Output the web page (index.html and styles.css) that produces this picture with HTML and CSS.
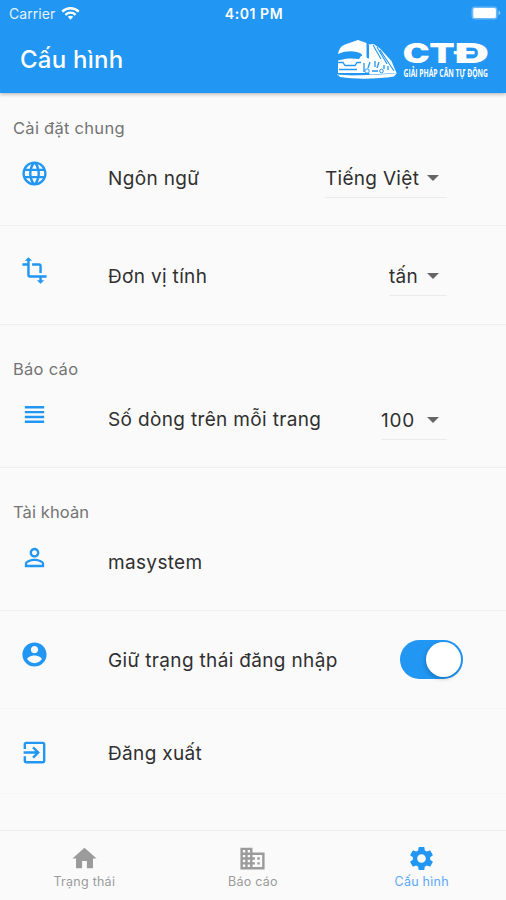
FILE: index.html
```html
<!DOCTYPE html>
<html lang="vi">
<head>
<meta charset="utf-8">
<meta name="viewport" content="width=device-width, initial-scale=1">
<title>Cấu hình</title>
<link rel="stylesheet" href="styles.css">
</head>
<body>
<div class="app">
  <header class="header">
    <div class="status">
      <div class="carrier"><span>Carrier</span>
        <svg class="wifi" viewBox="0 0 20 14"><g fill="none" stroke="#fff" stroke-width="2.5"><path d="M1.3 5.6C6.4.8 13.6.8 18.7 5.6"/><path d="M4.6 8.9C7.8 6 12.2 6 15.4 8.9"/></g><path fill="#fff" d="M10 14 7.1 11C8.8 9.6 11.2 9.6 12.9 11z"/></svg>
      </div>
      <div class="time">4:01 PM</div>
      <svg class="battery" viewBox="0 0 30 14"><rect x=".5" y=".5" width="26" height="13" rx="3.5" fill="#6db9f8"/><rect x="2.3" y="2" width="22.6" height="10" rx="1.5" fill="#fff"/><path fill="#8fc9fa" d="M27.5 4.8c2.4.5 2.4 3.9 0 4.4z"/></svg>
    </div>
    <div class="bar">
      <h1 class="title">Cấu hình</h1>
      <svg class="logo" viewBox="0 0 152 40">
        <g fill="#fff">
          <path d="M1 14C2 9 4 6 8 4.500L21 0l8.500 3V18l-4-1-1-3c-5-3-14-4-23.500 0z"/>
          <path d="M1 20.500c7-2.200 14-2.500 21-1.500l2-3 5 1 4 3v13H1z"/>
          <path d="M31.500 4.500l5-.500 6 4 12 13 5 12-27 1.500-1-14z"/>
          <path d="M0 34c18 2.500 42 1 60-1l-3 3.500c-16 2.500-38 3-54 .500z"/>
        </g>
        <g fill="none" stroke="#2196f3">
          <path stroke-width="1.300" d="M1 22.500h5l2 3h10l2-3h4M2 29.500h18M1 33.800c9 1 18 1 27 0"/>
          <path stroke-width="1.100" d="M31.500 5v13M36 5l8 14M40 7l10 17M43 10l14 21"/>
          <path stroke-width="1.300" d="M27 23v9M33 22l-2 6M38 21v6M42 22l-2 6M47 25v4M51 26v4M35 31h6"/>
          <circle cx="30" cy="31" r="2.200"/><circle cx="44.500" cy="31" r="1.800"/>
        </g>
        <g class="logo-name">
          <text x="65.800" y="23" textLength="27" lengthAdjust="spacingAndGlyphs">C</text>
          <text x="92.300" y="23" textLength="25.500" lengthAdjust="spacingAndGlyphs">T</text>
          <text x="117.500" y="23" textLength="34.500" lengthAdjust="spacingAndGlyphs">Đ</text>
        </g>
        <text class="logo-slogan" x="66.500" y="36.500" textLength="84.500" lengthAdjust="spacingAndGlyphs">GIẢI PHÁP CÂN TỰ ĐỘNG</text>
      </svg>
    </div>
  </header>

  <main class="settings">
    <section class="group">
      <h2 class="heading">Cài đặt chung</h2>
      <div class="row first">
        <svg class="icon globe" viewBox="0 0 24 24"><path d="M11.990 2C6.470 2 2 6.480 2 12s4.470 10 9.990 10C17.520 22 22 17.520 22 12S17.520 2 11.990 2zm6.930 6h-2.950c-.320-1.250-.780-2.450-1.380-3.560 1.840.630 3.370 1.910 4.330 3.560zM12 4.040c.830 1.200 1.480 2.530 1.910 3.960h-3.820c.430-1.430 1.080-2.760 1.910-3.960zM4.260 14C4.100 13.360 4 12.690 4 12s.100-1.360.260-2h3.380c-.080.660-.140 1.320-.140 2s.060 1.340.140 2H4.260zm.820 2h2.950c.320 1.250.780 2.450 1.380 3.560-1.840-.630-3.370-1.900-4.330-3.560zm2.950-8H5.080c.960-1.660 2.490-2.930 4.330-3.560C8.810 5.550 8.350 6.750 8.030 8zM12 19.960c-.830-1.200-1.480-2.530-1.910-3.960h3.820c-.430 1.430-1.080 2.760-1.910 3.960zM14.340 14H9.660c-.090-.660-.160-1.320-.160-2s.070-1.350.160-2h4.680c.090.650.160 1.320.160 2s-.070 1.340-.160 2zm.250 5.560c.600-1.110 1.060-2.310 1.380-3.560h2.950c-.960 1.650-2.490 2.930-4.330 3.560zM16.360 14c.080-.660.140-1.320.140-2s-.060-1.340-.140-2h3.380c.160.640.260 1.310.260 2s-.100 1.360-.260 2h-3.380z"/></svg>
        <span class="label">Ngôn ngữ</span>
        <span class="select lang"><span class="value">Tiếng Việt</span><i class="caret"></i></span>
      </div>
      <div class="row">
        <svg class="icon" viewBox="0 0 24 24"><path d="M22 18v-2H8V4h2L7 1 4 4h2v2H2v2h4v8c0 1.100.900 2 2 2h8v2h-2l3 3 3-3h-2v-2h4zM10 8h6v6h2V8c0-1.100-.900-2-2-2h-6v2z"/></svg>
        <span class="label">Đơn vị tính</span>
        <span class="select unit"><span class="value">tấn</span><i class="caret"></i></span>
      </div>
    </section>

    <section class="group">
      <h2 class="heading">Báo cáo</h2>
      <div class="row first">
        <svg class="icon" viewBox="0 0 24 24"><path d="M4 15h16v-2H4v2zm0 4h16v-2H4v2zm0-8h16V9H4v2zm0-6v2h16V5H4z"/></svg>
        <span class="label">Số dòng trên mỗi trang</span>
        <span class="select count"><span class="value">100</span><i class="caret"></i></span>
      </div>
    </section>

    <section class="group">
      <h2 class="heading">Tài khoản</h2>
      <div class="row first">
        <svg class="icon" viewBox="0 0 24 24"><path d="M12 5.900c1.160 0 2.100.940 2.100 2.100s-.940 2.100-2.100 2.100S9.900 9.160 9.900 8s.940-2.100 2.100-2.100m0 9c2.970 0 6.100 1.460 6.100 2.100v1.100H5.900V17c0-.640 3.130-2.100 6.100-2.100M12 4C9.790 4 8 5.790 8 8s1.790 4 4 4 4-1.790 4-4-1.790-4-4-4zm0 9c-2.670 0-8 1.340-8 4v3h16v-3c0-2.660-5.330-4-8-4z"/></svg>
        <span class="label">masystem</span>
      </div>
      <div class="row keep">
        <svg class="icon" viewBox="0 0 24 24"><path d="M12 2C6.480 2 2 6.480 2 12s4.480 10 10 10 10-4.480 10-10S17.520 2 12 2zm0 3c1.660 0 3 1.340 3 3s-1.340 3-3 3-3-1.340-3-3 1.340-3 3-3zm0 14.200c-2.500 0-4.710-1.280-6-3.220.030-1.990 4-3.080 6-3.080 1.990 0 5.970 1.090 6 3.080-1.290 1.940-3.500 3.220-6 3.220z"/></svg>
        <span class="label">Giữ trạng thái đăng nhập</span>
        <span class="switch"><i class="knob"></i></span>
      </div>
      <div class="row logout">
        <svg class="icon" viewBox="0 0 24 24"><path d="M10.090 15.590 11.500 17l5-5-5-5-1.410 1.410L12.670 11H3v2h9.670l-2.580 2.590zM19 3H5c-1.110 0-2 .900-2 2v4h2V5h14v14H5v-4H3v4c0 1.100.890 2 2 2h14c1.100 0 2-.900 2-2V5c0-1.100-.900-2-2-2z"/></svg>
        <span class="label">Đăng xuất</span>
      </div>
    </section>
  </main>

  <nav class="tabs">
    <a class="tab"><svg viewBox="0 0 24 24"><path d="M10 20v-6h4v6h5v-8h3L12 3 2 12h3v8z"/></svg><span>Trạng thái</span></a>
    <a class="tab"><svg viewBox="0 0 24 24"><path d="M12 7V3H2v18h20V7H12zM6 19H4v-2h2v2zm0-4H4v-2h2v2zm0-4H4V9h2v2zm0-4H4V5h2v2zm4 12H8v-2h2v2zm0-4H8v-2h2v2zm0-4H8V9h2v2zm0-4H8V5h2v2zm10 12h-8v-2h2v-2h-2v-2h2v-2h-2V9h8v10zm-2-8h-2v2h2v-2zm0 4h-2v2h2v-2z"/></svg><span>Báo cáo</span></a>
    <a class="tab active"><svg viewBox="0 0 24 24"><path d="M19.140 12.940c.040-.300.060-.610.060-.940 0-.320-.020-.640-.070-.940l2.030-1.580c.180-.140.230-.410.120-.610l-1.920-3.320c-.120-.220-.370-.290-.590-.220l-2.390.960c-.500-.380-1.030-.700-1.620-.940l-.360-2.540c-.040-.240-.240-.410-.480-.410h-3.840c-.240 0-.430.170-.470.410l-.360 2.540c-.590.240-1.130.570-1.620.940l-2.390-.960c-.220-.080-.470 0-.590.220L2.740 8.870c-.120.210-.080.470.120.610l2.030 1.580c-.050.300-.090.630-.090.940s.020.640.070.940l-2.030 1.580c-.180.140-.230.410-.120.610l1.920 3.320c.120.220.370.290.590.220l2.390-.960c.500.380 1.030.700 1.620.940l.360 2.540c.050.240.240.410.480.410h3.840c.240 0 .440-.170.470-.410l.360-2.540c.590-.240 1.130-.560 1.620-.940l2.390.960c.220.080.470 0 .590-.220l1.920-3.320c.120-.220.070-.470-.120-.610l-2.010-1.580zM12 15.600c-1.980 0-3.600-1.620-3.600-3.600s1.620-3.600 3.600-3.600 3.600 1.620 3.600 3.600-1.620 3.600-3.600 3.600z"/></svg><span>Cấu hình</span></a>
  </nav>
</div>
</body>
</html>
```
FILE: styles.css
```css
* { box-sizing: border-box; }

body {
  margin: 0;
  background: #fafafa;
  color: #303030;
  font-family: Inter, "Liberation Sans", sans-serif;
}

.app {
  display: flex;
  flex-direction: column;
  width: 506px;
  height: 900px;
  overflow: hidden;
}

.header {
  flex: none;
  height: 93px;
  background: #2196f3;
  color: #fff;
  box-shadow: 0 1px 4px rgba(0, 0, 0, .32);
}

.status {
  display: grid;
  grid-template-columns: 1fr auto 1fr;
  align-items: center;
  height: 26px;
  padding: 0 5px 0 9px;
}

.carrier { display: flex; align-items: center; gap: 6px; font-size: 14px; letter-spacing: .05px; color: #e4f2fe; }
.wifi { width: 19px; height: 14px; margin-top: -1px; }
.time { margin-left: -2px; font-size: 14px; font-weight: 600; letter-spacing: .55px; }
.battery { width: 30px; height: 14px; justify-self: end; }

.bar {
  display: flex;
  align-items: center;
  justify-content: space-between;
  height: 67px;
  padding: 0 17px 0 20px;
}

.title { margin: 0; font-size: 24px; font-weight: 500; line-height: 32px; letter-spacing: .25px; }
.logo { width: 152px; height: 40px; overflow: visible; }
.logo-name { fill: #fff; font: 900 26.500px Inter, sans-serif; }
.logo-slogan { fill: #fff; font: 700 10px "Open Sans", sans-serif; }

.settings { flex: 1; }

.heading {
  height: 50px;
  margin: 0;
  padding: 22px 13px 0;
  font-size: 16.500px;
  font-weight: 400;
  line-height: 26px;
  letter-spacing: .28px;
  color: #747474;
}
.group + .group .heading { height: 60px; padding-top: 31px; }
.group:last-child .heading { letter-spacing: .1px; }

.row {
  display: flex;
  align-items: flex-start;
  height: 99px;
  padding: 30px 43px 0 20px;
  border-bottom: 1px solid #f0f0f0;
}
.row.first { height: 83px; padding-top: 15px; }
.row.keep { height: 98px; padding-top: 29px; border-color: #f6f6f6; }
.row.logout { height: 85px; padding-top: 29px; border-color: #f6f6f6; }

.icon { flex: none; width: 29px; height: 29px; fill: #2196f3; }
.icon.globe { margin-top: 1px; }
.label { flex: 1; margin: 6px 0 0 59px; font-size: 19px; line-height: 30px; letter-spacing: .34px; white-space: nowrap; }
.first .label { margin-top: 5px; }
.first .globe + .label { margin-top: 6px; }
.logout .label { margin-top: 1px; }

.select {
  display: flex;
  justify-content: space-between;
  flex: none;
  height: 40px;
  margin-right: 16px;
  padding-right: 8px;
  border-bottom: 1px solid #ebebeb;
  font-size: 19px;
  line-height: 42px;
  letter-spacing: .3px;
}
.lang { width: 122px; }
.unit { width: 58px; }
.count { width: 66px; letter-spacing: .8px; }
.value { white-space: nowrap; }
.caret { width: 12px; height: 6px; margin-top: 17px; background: #666; clip-path: polygon(0 0, 100% 0, 50% 100%); }

.switch {
  display: flex;
  justify-content: flex-end;
  flex: none;
  width: 63px;
  height: 39px;
  padding: 2px;
  border-radius: 20px;
  background: #2196f3;
}
.knob { width: 35px; height: 35px; border-radius: 50%; background: #fff; box-shadow: -1px 2px 4px rgba(0, 0, 0, .2); }

.tabs {
  display: grid;
  grid-template-columns: repeat(3, 1fr);
  height: 70px;
  border-top: 1px solid #efefef;
}
.tab { display: flex; flex-direction: column; align-items: center; padding-top: 13px; color: #9b9b9b; font-size: 12.500px; line-height: 17px; letter-spacing: .25px; }
.tab svg { width: 29px; height: 29px; fill: currentColor; }
.tab.active { color: #2196f3; }
.tab.active span { color: #5aa8f8; }
```
